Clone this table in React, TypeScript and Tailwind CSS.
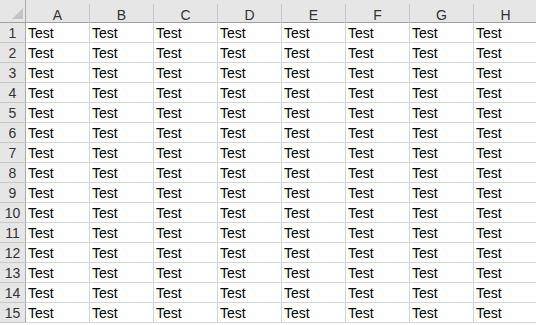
const cols = ['A', 'B', 'C', 'D', 'E', 'F', 'G', 'H'];
const rows = Array.from({ length: 15 }, (_, i) => i + 1);

export default function App() {
  return (
    <div className="w-[536px] h-[325px] overflow-hidden bg-white font-['Liberation_Sans',Arial,sans-serif] text-[14px] text-black">
      {/* column headers */}
      <div className="flex h-[23px] bg-[#e6e6e6] border-b border-[#9f9f9f] shrink-0">
        <div className="relative w-[26px] shrink-0 border-r border-[#ababab]">
          <svg className="absolute left-[12px] top-[8px]" width="11" height="11" viewBox="0 0 11 11">
            <polygon points="11,0 11,11 0,11" fill="#c4c4c4" />
          </svg>
        </div>
        {cols.map(c => (
          <div key={c} className="w-[64px] shrink-0 flex flex-col">
            <div className="flex-1 mt-[4px] border-r border-[#c8c8c8] flex items-center justify-center text-[#333] pt-[1px]">
              {c}
            </div>
          </div>
        ))}
      </div>

      {rows.map(r => (
        <div key={r} className="flex h-[20px] shrink-0">
          <div className="w-[26px] shrink-0 bg-[#e6e6e6] border-r border-[#ababab] border-b border-b-[#c8c8c8] flex items-end justify-center text-[#333] leading-[18px]">
            {r}
          </div>
          {cols.map(c => (
            <div
              key={c}
              className="w-[64px] shrink-0 border-r border-b border-[#d4d4d4] flex items-end pl-[2px] leading-[18px]"
            >
              Test
            </div>
          ))}
        </div>
      ))}
    </div>
  );
}
